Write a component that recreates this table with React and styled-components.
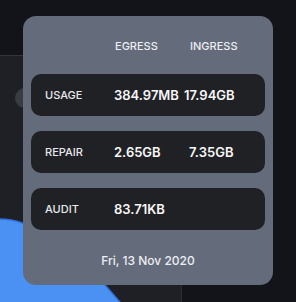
import React from "react";
import styled, { createGlobalStyle } from "styled-components";

const Global = createGlobalStyle`
  html, body { margin: 0; padding: 0; background: #131419; }
  body { font-family: Inter, "Noto Sans", sans-serif; }
`;

const Page = styled.div`
  position: relative;
  width: 296px;
  height: 302px;
  overflow: hidden;
  background: #131419;
  padding-top: 55px;
  box-sizing: border-box;
`;

const Card = styled.div`
  position: relative;
  width: 182px;
  height: 260px;
  background: #1f2025;
  border-top: 1px solid #34353a;
  border-right: 1px solid #2c2d32;
  box-sizing: border-box;
  overflow: hidden;
`;

const Knob = styled.div`
  position: absolute;
  left: 15px;
  top: 32px;
  width: 20px;
  height: 20px;
  border-radius: 50%;
  background: #3a3c43;
`;

const Chart = styled.svg`
  position: absolute;
  left: 0;
  top: 0;
  width: 182px;
  height: 260px;
`;

const Tooltip = styled.div`
  position: absolute;
  left: 23px;
  top: 16px;
  width: 250px;
  height: 269px;
  box-sizing: border-box;
  padding: 0 8px;
  border-radius: 13px;
  background: #646b7a;
  display: flex;
  flex-direction: column;
`;

const Header = styled.div`
  display: flex;
  padding: 22px 0 20px 84px;
  height: 16px;
  font-size: 11px;
  line-height: 16px;
  font-weight: 500;
  color: #eceef2;
`;

const HeadCell = styled.div`
  width: ${(p) => p.$w}px;
`;

const Rows = styled.div`
  display: flex;
  flex-direction: column;
  gap: 15px;
`;

const Row = styled.div`
  display: flex;
  align-items: center;
  height: 42px;
  border-radius: 10px;
  background: #202125;
  padding-left: 14px;
`;

const Label = styled.div`
  width: 69px;
  font-size: 11px;
  font-weight: 500;
  color: #e8e9ec;
`;

const Value = styled.div`
  width: ${(p) => p.$w}px;
  font-size: 13px;
  font-weight: 600;
  color: #f7f7f8;
  white-space: nowrap;
`;

const DateText = styled.div`
  margin-top: 23px;
  text-align: center;
  font-size: 12px;
  line-height: 16px;
  font-weight: 500;
  color: #eceef2;
`;

const rows = [
  { label: "USAGE", values: ["384.97MB", "17.94GB"], w: 70 },
  { label: "REPAIR", values: ["2.65GB", "7.35GB"], w: 75 },
  { label: "AUDIT", values: ["83.71KB"], w: 75 },
];

export default function App() {
  return (
    <>
      <Global />
      <Page>
        <Card>
          <Knob />
          <Chart viewBox="0 0 182 260">
            <path
              d="M0,163 C30,163 62,185 106,230 L132,260 L0,260 Z"
              fill="#4b91f4"
            />
            <path
              d="M0,163 C30,163 62,185 106,230 L132,260"
              fill="none"
              stroke="#2f6ed8"
              strokeWidth="1.5"
            />
          </Chart>
        </Card>
        <Tooltip>
          <Header>
            <HeadCell $w={75}>EGRESS</HeadCell>
            <HeadCell $w={75}>INGRESS</HeadCell>
          </Header>
          <Rows>
            {rows.map((r) => (
              <Row key={r.label}>
                <Label>{r.label}</Label>
                {r.values.map((v) => (
                  <Value key={v} $w={r.w}>
                    {v}
                  </Value>
                ))}
              </Row>
            ))}
          </Rows>
          <DateText>Fri, 13 Nov 2020</DateText>
        </Tooltip>
      </Page>
    </>
  );
}
